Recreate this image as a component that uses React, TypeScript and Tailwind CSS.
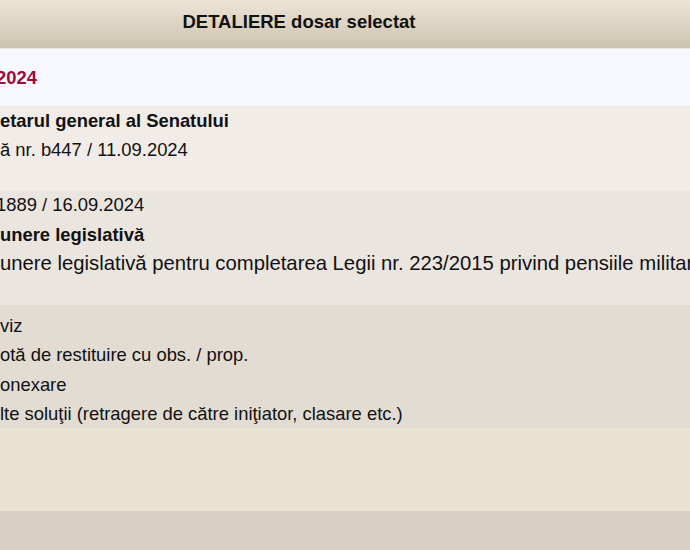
import React from "react";

const Row = ({
  className,
  children,
}: {
  className: string;
  children?: React.ReactNode;
}) => (
  <div className={`w-full overflow-hidden whitespace-nowrap ${className}`}>
    {children}
  </div>
);

const App = () => {
  return (
    <div className="w-[690px] h-[550px] overflow-hidden flex flex-col font-['Liberation_Sans',Arial,sans-serif] text-[18.4px] text-[#111]">
      {/* header */}
      <div className="h-[49px] shrink-0 flex items-center justify-center pr-[92px] bg-gradient-to-b from-[#ece4d6] to-[#cdc3b0] border-b border-[#e9e5de]">
        <h2 className="font-bold text-[18.5px] pb-[4px]">DETALIERE dosar selectat</h2>
      </div>

      {/* nr dosar */}
      <Row className="h-[58px] shrink-0 flex items-center bg-[#f7f8fd] border-b border-[#ebe8e4]">
        <span className="font-bold text-[#9c0b3b] -ml-[4px] pt-[1px]">2024</span>
      </Row>

      {/* initiator */}
      <Row className="h-[84px] shrink-0 bg-[#f1ece7] leading-[29px]">
        <div className="-mt-[1px]">
          <p className="font-bold">etarul general al Senatului</p>
          <p>ă nr. b447 / 11.09.2024</p>
        </div>
      </Row>

      {/* inregistrare */}
      <Row className="h-[114px] shrink-0 bg-[#ebe5e0] leading-[29.5px]">
        <div className="-mt-[1px]">
          <p className="-ml-[4px]">1889 / 16.09.2024</p>
          <p className="font-bold">unere legislativă</p>
          <p className="text-[20.3px]">
            unere legislativă pentru completarea Legii nr. 223/2015 privind pensiile militare de stat
          </p>
        </div>
      </Row>

      {/* solutii */}
      <Row className="h-[123px] shrink-0 bg-[#e2dcd3] pt-[6px] leading-[29.4px]">
        <p>viz</p>
        <p>otă de restituire cu obs. / prop.</p>
        <p>onexare</p>
        <p>lte soluţii (retragere de către iniţiator, clasare etc.)</p>
      </Row>

      <Row className="h-[83px] shrink-0 bg-[#e9e1d1]" />
      <Row className="flex-1 bg-[#d8cfc3]" />
    </div>
  );
};

export default App;
